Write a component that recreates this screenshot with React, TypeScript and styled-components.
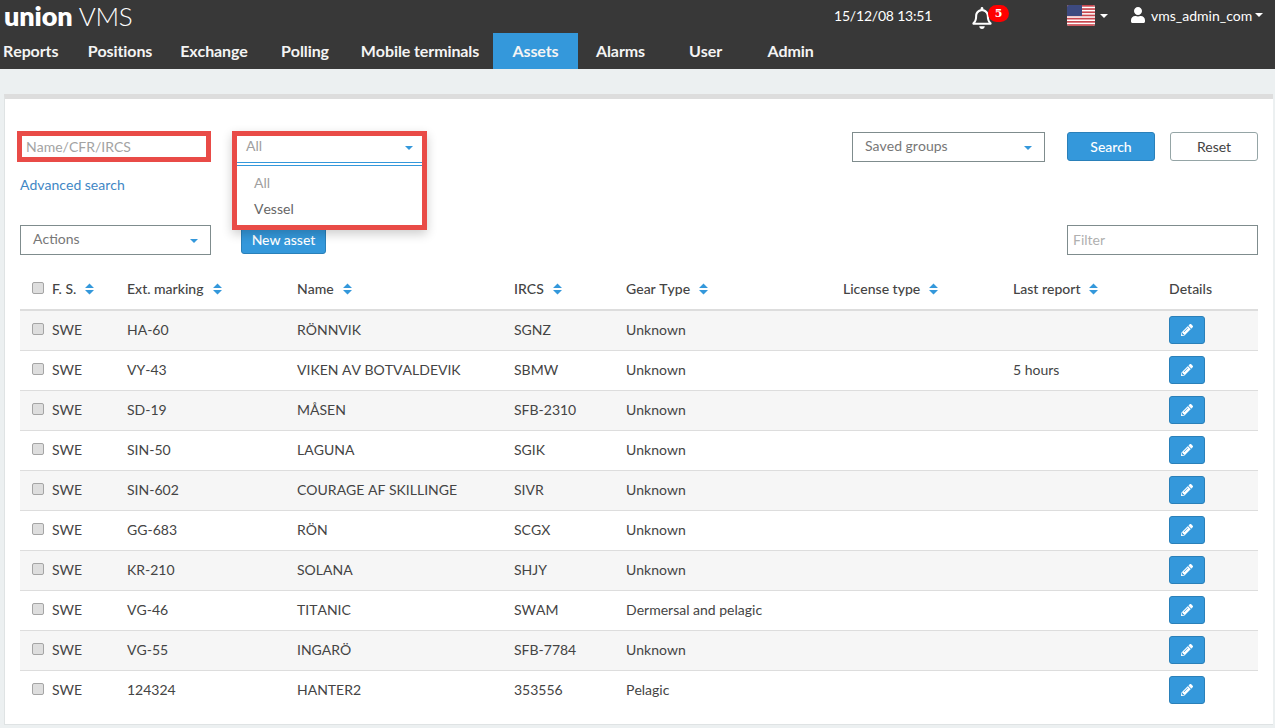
import React from "react";
import styled, { createGlobalStyle } from "styled-components";
import { FaRegBell, FaUser, FaPencilAlt } from "react-icons/fa";

const GlobalStyle = createGlobalStyle`
  html, body { margin: 0; padding: 0; background: #ecf0f1; }
  body { font-family: Lato, "Open Sans", sans-serif; font-size: 14px; color: #444; font-kerning: none; }
  * { box-sizing: border-box; }
`;

const Header = styled.header`
  height: 69px;
  background: #383838;
  color: #fff;
`;

const TopBar = styled.div`
  height: 33px;
  display: flex;
  align-items: center;
  padding-bottom: 2px;
`;

const Logo = styled.div`
  margin-left: 4px;
  width: 830px;
  font-size: 27px;
  line-height: 31px;
  font-weight: 800;
  letter-spacing: -0.1px;
  white-space: nowrap;
  span {
    font-weight: 300;
    font-size: 26px;
    letter-spacing: -0.3px;
  }
`;

const DateText = styled.div`
  width: 137px;
  font-size: 14px;
  letter-spacing: -0.2px;
`;

const BellWrap = styled.div`
  position: relative;
  width: 96px;
  height: 24px;
  font-size: 22px;
  svg { display: block; margin-top: 3px; }
`;

const Badge = styled.span`
  position: absolute;
  left: 17px;
  top: 1px;
  width: 21px;
  height: 17px;
  border-radius: 9px;
  background: #f00;
  color: #fff;
  font: bold 11px/17px "DejaVu Serif", serif;
  text-align: center;
`;

const FlagButton = styled.div`
  width: 63px;
  display: flex;
  align-items: center;
  gap: 5px;
`;

const Caret = styled.i<{ $color?: string }>`
  display: inline-block;
  width: 0;
  height: 0;
  border-left: 4px solid transparent;
  border-right: 4px solid transparent;
  border-top: 4px solid ${(p) => p.$color || "#fff"};
`;

const UserMenu = styled.div`
  display: flex;
  align-items: center;
  padding-bottom: 1px;
  font-size: 14px;
  svg.user { margin-right: 5px; font-size: 16px; }
  i { margin-left: 3px; }
`;

const Nav = styled.nav`
  height: 36px;
  display: flex;
`;

const NavItem = styled.a<{ $w: number; $active?: boolean }>`
  width: ${(p) => p.$w}px;
  height: 36px;
  display: flex;
  align-items: center;
  justify-content: center;
  padding-bottom: 2px;
  font-size: 16px;
  font-weight: 700;
  letter-spacing: -0.1px;
  color: #f4f4f4;
  background: ${(p) => (p.$active ? "#3498db" : "transparent")};
  &:first-child {
    justify-content: flex-start;
    padding-left: 3px;
  }
`;

const Panel = styled.main`
  margin: 25px 2px 3px 4px;
  height: 631px;
  background: #fff;
  border-top: 5px solid #dddddd;
  border-left: 1px solid #dfe3e4;
  border-bottom: 1px solid #dfe3e4;
  padding: 32px 15px 15px 15px;
`;

const SearchRow = styled.div`
  display: flex;
  align-items: flex-start;
  height: 31px;
`;

const Highlighted = styled.div`
  border: 5px solid #e94b47;
  width: 194px;
  height: 31px;
  margin-left: -3px;
  background: #fff;
  padding-left: 4px;
  font-size: 14px;
  line-height: 21px;
  color: #a3a3a3;
`;

const SelectSlot = styled.div`
  position: relative;
  width: 195px;
  height: 31px;
  margin-left: 21px;
`;

const OpenSelect = styled.div`
  position: absolute;
  left: 0;
  top: 0;
  z-index: 2;
  width: 195px;
  height: 99px;
  border: 5px solid #e94b47;
  background: #fff;
  box-shadow: 0 4px 10px rgba(0, 0, 0, 0.2);
`;

const OpenTrigger = styled.div`
  height: 27px;
  border-bottom: 1px solid #3498db;
  padding: 0 9px 8px;
  display: flex;
  justify-content: space-between;
  align-items: center;
  color: #a0a0a0;
  i { position: relative; top: 3px; }
`;

const OpenMenu = styled.div`
  border-top: 1px solid #3498db;
  margin-top: 2px;
  padding: 4px 0 0 17px;
`;

const MenuItem = styled.div<{ $muted?: boolean }>`
  height: 26px;
  line-height: 26px;
  color: ${(p) => (p.$muted ? "#a0a0a0" : "#666")};
`;

const SelectBox = styled.div<{ $w: number; $inset: number }>`
  width: ${(p) => p.$w}px;
  height: 30px;
  border: 1px solid #7f8c8d;
  background: #fff;
  display: flex;
  justify-content: space-between;
  align-items: center;
  padding: 0 12px 3px ${(p) => p.$inset}px;
  color: #777;
  font-size: 14px;
  i { position: relative; top: 2px; }
`;

const RightGroup = styled.div`
  margin-left: auto;
  margin-top: 1px;
  display: flex;
  align-items: flex-start;
`;

const Button = styled.button<{ $ghost?: boolean; $w: number; $ml?: number; $h?: number }>`
  width: ${(p) => p.$w}px;
  height: ${(p) => p.$h || 29}px;
  margin-left: ${(p) => p.$ml || 0}px;
  padding: 0;
  border-radius: 3px;
  border: 1px solid ${(p) => (p.$ghost ? "#95a5a6" : "#2a80b9")};
  background: ${(p) => (p.$ghost ? "#fff" : "#3498db")};
  color: ${(p) => (p.$ghost ? "#444" : "#fff")};
  font-family: Lato, sans-serif;
  font-size: 14px;
  font-weight: ${(p) => (p.$ghost ? 400 : 500)};
`;

const NewAssetButton = styled(Button)`
  margin-bottom: 1px;
  padding-bottom: 2px;
`;

const AdvancedLink = styled.a`
  display: block;
  height: 21px;
  margin-top: 12px;
  line-height: 21px;
  color: #3f87c5;
  font-size: 14px;
`;

const ActionRow = styled.div`
  display: flex;
  align-items: flex-end;
  height: 30px;
  margin-top: 30px;
`;

const FilterInput = styled.div`
  margin-left: auto;
  width: 191px;
  height: 30px;
  border: 1px solid #7f8c8d;
  padding-left: 5px;
  line-height: 28px;
  color: #b0b0b0;
  font-size: 14px;
`;

const Table = styled.table`
  width: 1238px;
  margin-top: 15px;
  table-layout: fixed;
  border-collapse: collapse;
`;

const HeadCell = styled.th<{ $w: number }>`
  width: ${(p) => p.$w}px;
  height: 40px;
  padding: 0 0 2px 12px;
  text-align: left;
  font-weight: 500;
  font-size: 14px;
  color: #444;
  white-space: nowrap;
  border-bottom: 2px solid #ddd;
  &:first-child { font-kerning: normal; }
`;

const Row = styled.tr<{ $striped: boolean }>`
  height: 40px;
  background: ${(p) => (p.$striped ? "#f6f6f6" : "#fff")};
  border-bottom: 1px solid #ddd;
  &:last-child { border-bottom: none; }
`;

const Cell = styled.td`
  padding: 0 0 2px 12px;
  font-size: 14px;
  color: #444;
  white-space: nowrap;
`;

const ControlCell = styled(Cell)`
  padding-bottom: 0;
`;

const CheckWrap = styled.span`
  display: inline-flex;
  align-items: center;
`;

const Check = styled.input.attrs({ type: "checkbox", readOnly: true })`
  appearance: none;
  width: 12px;
  height: 12px;
  margin: 0 8px -1px 0;
  position: relative;
  top: -1px;
  border: 1px solid #a5a5a5;
  border-radius: 2px;
  background: #dedede;
`;

const EditButton = styled(Button)`
  display: flex;
  align-items: center;
  justify-content: center;
  font-size: 12px;
`;

const SortSvg = styled.svg`
  margin-left: 9px;
  vertical-align: -1px;
`;

const SortIcon = () => (
  <SortSvg width="9" height="12" viewBox="0 0 9 12">
    <path d="M4.5 0.5 L9 5 H0 Z M0 7 H9 L4.5 11.5 Z" fill="#3498db" />
  </SortSvg>
);

const UsFlag = () => (
  <svg width="28" height="21" viewBox="0 0 28 21">
    <defs>
      <clipPath id="flagClip">
        <rect width="28" height="21" rx="2" />
      </clipPath>
    </defs>
    <g clipPath="url(#flagClip)">
      <rect width="28" height="21" fill="#fff" />
      {[0, 1, 2, 3, 4, 5, 6].map((i) => (
        <rect key={i} y={i * 3.2} width="28" height="1.7" fill="#c9474f" />
      ))}
      <rect width="15" height="11" fill="#3d4a80" />
    </g>
  </svg>
);

const columns = [
  { label: "F. S.", w: 95, sort: true },
  { label: "Ext. marking", w: 170, sort: true },
  { label: "Name", w: 217, sort: true },
  { label: "IRCS", w: 112, sort: true },
  { label: "Gear Type", w: 217, sort: true },
  { label: "License type", w: 170, sort: true },
  { label: "Last report", w: 156, sort: true },
  { label: "Details", w: 101, sort: false },
];

const assets = [
  ["HA-60", "RÖNNVIK", "SGNZ", "Unknown", ""],
  ["VY-43", "VIKEN AV BOTVALDEVIK", "SBMW", "Unknown", "5 hours"],
  ["SD-19", "MÅSEN", "SFB-2310", "Unknown", ""],
  ["SIN-50", "LAGUNA", "SGIK", "Unknown", ""],
  ["SIN-602", "COURAGE AF SKILLINGE", "SIVR", "Unknown", ""],
  ["GG-683", "RÖN", "SCGX", "Unknown", ""],
  ["KR-210", "SOLANA", "SHJY", "Unknown", ""],
  ["VG-46", "TITANIC", "SWAM", "Dermersal and pelagic", ""],
  ["VG-55", "INGARÖ", "SFB-7784", "Unknown", ""],
  ["124324", "HANTER2", "353556", "Pelagic", ""],
];

const navItems = [
  { label: "Reports", w: 75 },
  { label: "Positions", w: 90 },
  { label: "Exchange", w: 98 },
  { label: "Polling", w: 84 },
  { label: "Mobile terminals", w: 146 },
  { label: "Assets", w: 85, active: true },
  { label: "Alarms", w: 85 },
  { label: "User", w: 85 },
  { label: "Admin", w: 85 },
];

const App = () => {
  return (
    <>
      <GlobalStyle />
      <Header>
        <TopBar>
          <Logo>
            union <span>VMS</span>
          </Logo>
          <DateText>15/12/08 13:51</DateText>
          <BellWrap>
            <FaRegBell />
            <Badge>5</Badge>
          </BellWrap>
          <FlagButton>
            <UsFlag />
            <Caret />
          </FlagButton>
          <UserMenu>
            <FaUser className="user" />
            vms_admin_com
            <Caret />
          </UserMenu>
        </TopBar>
        <Nav>
          {navItems.map((item) => (
            <NavItem key={item.label} $w={item.w} $active={item.active}>
              {item.label}
            </NavItem>
          ))}
        </Nav>
      </Header>
      <Panel>
        <SearchRow>
          <Highlighted>Name/CFR/IRCS</Highlighted>
          <SelectSlot>
            <OpenSelect>
              <OpenTrigger>
                All
                <Caret $color="#3498db" />
              </OpenTrigger>
              <OpenMenu>
                <MenuItem $muted>All</MenuItem>
                <MenuItem>Vessel</MenuItem>
              </OpenMenu>
            </OpenSelect>
          </SelectSlot>
          <RightGroup>
            <SelectBox $w={193} $inset={12}>
              Saved groups
              <Caret $color="#3498db" />
            </SelectBox>
            <Button $w={88} $ml={22}>
              Search
            </Button>
            <Button $w={88} $ml={15} $ghost>
              Reset
            </Button>
          </RightGroup>
        </SearchRow>
        <AdvancedLink>Advanced search</AdvancedLink>
        <ActionRow>
          <SelectBox $w={191} $inset={12}>
            Actions
            <Caret $color="#3498db" />
          </SelectBox>
          <NewAssetButton $w={85} $ml={30} $h={27}>
            New asset
          </NewAssetButton>
          <FilterInput>Filter</FilterInput>
        </ActionRow>
        <Table>
          <thead>
            <tr>
              {columns.map((col, i) => (
                <HeadCell key={col.label} $w={col.w}>
                  {i === 0 && <Check />}
                  {col.label}
                  {col.sort && <SortIcon />}
                </HeadCell>
              ))}
            </tr>
          </thead>
          <tbody>
            {assets.map((asset, index) => (
              <Row key={asset[0]} $striped={index % 2 === 0}>
                <ControlCell>
                  <CheckWrap>
                    <Check />
                    SWE
                  </CheckWrap>
                </ControlCell>
                <Cell>{asset[0]}</Cell>
                <Cell>{asset[1]}</Cell>
                <Cell>{asset[2]}</Cell>
                <Cell>{asset[3]}</Cell>
                <Cell />
                <Cell>{asset[4]}</Cell>
                <ControlCell>
                  <EditButton $w={36} $h={28}>
                    <FaPencilAlt />
                  </EditButton>
                </ControlCell>
              </Row>
            ))}
          </tbody>
        </Table>
      </Panel>
    </>
  );
};

export default App;
